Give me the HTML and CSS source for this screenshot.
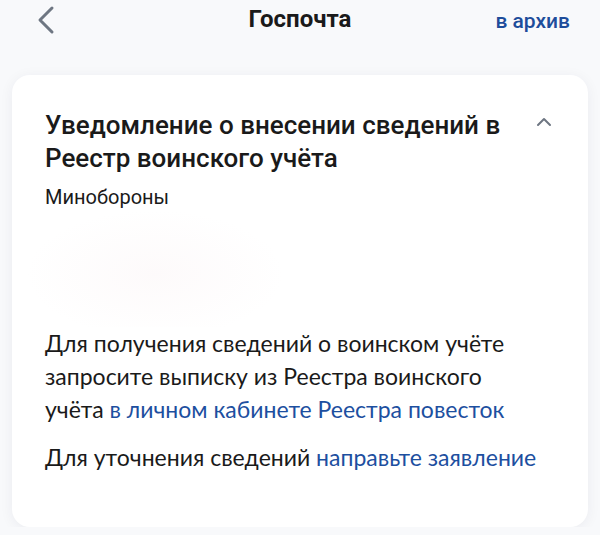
FILE: index.html
```html
<!DOCTYPE html>
<html lang="ru">
<head>
    <meta charset="UTF-8">
    <meta name="viewport" content="width=device-width, initial-scale=1.0">
    <title>Госпочта</title>
    <link rel="stylesheet" href="styles.css">
</head>
<body>
    <!-- Шапка -->
    <div class="topbar">
        <a class="back" href="#">
            <svg width="20" height="30" viewBox="0 0 20 30">
                <path d="M16 3 L4 15 L16 27" fill="none" stroke="#6e7682" stroke-width="3" stroke-linecap="round" stroke-linejoin="round"/>
            </svg>
        </a>
        <div class="topbar-title">Госпочта</div>
        <a class="archive" href="#">в архив</a>
    </div>

    <!-- Письмо -->
    <div class="card">
        <div class="card-head">
            <div class="card-title">Уведомление о внесении сведений в Реестр воинского учёта</div>
            <svg class="collapse" width="16" height="10" viewBox="0 0 16 10">
                <path d="M2 8 L8 2 L14 8" fill="none" stroke="#6e7682" stroke-width="2" stroke-linecap="round" stroke-linejoin="round"/>
            </svg>
        </div>
        <div class="sender">Минобороны</div>

        <div class="stamp"></div>

        <div class="body">
            <p class="text">Для получения сведений о воинском учёте запросите выписку из Реестра воинского учёта <a href="#">в личном кабинете Реестра повесток</a></p>
            <p class="text">Для уточнения сведений <a href="#">направьте заявление</a></p>
        </div>
    </div>
</body>
</html>
```

FILE: styles.css
```css
body {
    margin: 0;
    background: #f8f9fb;
    font-family: Roboto, "Noto Sans", sans-serif;
    color: #1a1a1a;
}
a {
    text-decoration: none;
}
.topbar {
    height: 44px;
    display: flex;
    align-items: center;
    justify-content: space-between;
    padding: 0 30px 0 36px;
    position: relative;
}
.back {
    display: flex;
    margin-top: -4px;
}
.topbar-title {
    position: absolute;
    left: 0;
    right: 0;
    top: 5px;
    text-align: center;
    font-size: 24px;
    font-weight: 700;
    pointer-events: none;
}
.archive {
    color: #1e4d9b;
    font-size: 21px;
    font-weight: 500;
    margin-top: -2px;
}
.card {
    background: #fff;
    margin: 31px 12px 0;
    border-radius: 18px;
    box-shadow: 0 2px 14px rgba(30, 40, 70, 0.06);
    padding: 34px 36px 53px 33px;
}
.card-head {
    display: flex;
    justify-content: space-between;
    align-items: flex-start;
}
.card-title {
    font-size: 26px;
    font-weight: 500;
    line-height: 33px;
    max-width: 475px;
}
.collapse {
    margin-top: 8px;
}
.sender {
    font-size: 20px;
    line-height: 24px;
    margin-top: 10px;
}
.stamp {
    height: 118px;
    margin-left: -20px;
    width: 260px;
    background: radial-gradient(ellipse at 50% 55%, rgba(240, 215, 220, 0.12), rgba(255, 255, 255, 0) 70%);
}
.body {
    padding-right: 8px;
}
.text {
    font-family: Lato, "Open Sans", sans-serif;
    font-size: 23px;
    line-height: 33px;
    margin: 0 0 15px;
}
.text:last-child {
    margin-bottom: 0;
}
.text a {
    color: #1d4f9f;
}
```
